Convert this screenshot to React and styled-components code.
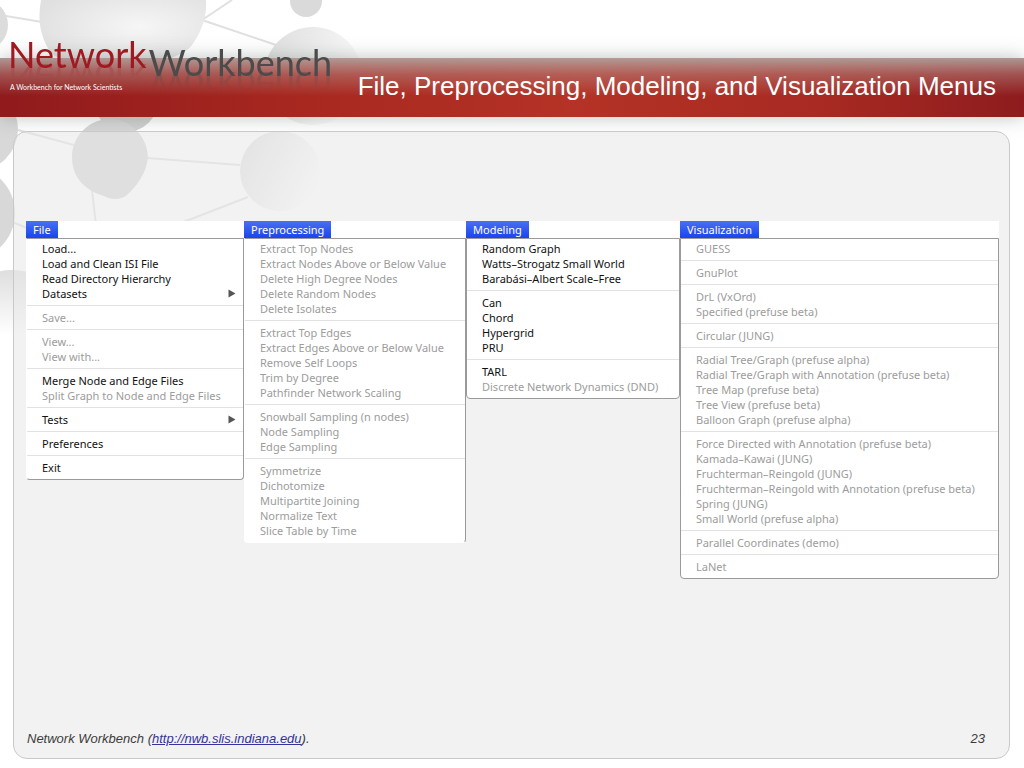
import React from "react";
import styled, { createGlobalStyle } from "styled-components";

const GlobalStyle = createGlobalStyle`
  * { box-sizing: border-box; }
  body {
    margin: 0;
    background: #ffffff;
    font-family: "Liberation Sans", Arial, sans-serif;
  }
`;

const Slide = styled.div`
  position: relative;
  min-height: 100vh;
  display: flex;
  flex-direction: column;
  overflow: hidden;
`;

const Molecules = styled.svg`
  position: absolute;
  top: 0;
  left: 0;
  pointer-events: none;
`;

const Header = styled.header`
  position: relative;
  padding-top: 58px;
`;

const Band = styled.div`
  display: flex;
  align-items: center;
  justify-content: space-between;
  height: 59px;
  padding: 0 28px 4px 8px;
  background:
    linear-gradient(180deg, rgba(180, 172, 168, 0.85) 0, rgba(180, 140, 135, 0.5) 16px, rgba(180, 100, 90, 0) 38px),
    linear-gradient(90deg, #901a1c 0%, #a82820 30%, #b43226 56%, #a82a22 80%, #8e1c1e 100%);
  box-shadow: 0 0 18px rgba(90, 105, 100, 0.4);
`;

const Brand = styled.div`
  display: flex;
  flex-direction: column;
  margin-top: -46px;
`;

const Wordmark = styled.div`
  display: flex;
  align-items: flex-start;
  gap: 2px;
  font-family: Lato, sans-serif;
  font-size: 36px;
  font-weight: 400;
  line-height: 40px;
`;

const Word = styled.span`
  color: ${(p) => (p.$dark ? "#4b4b4b" : "#a01820")};
  padding-top: ${(p) => (p.$dark ? "8px" : "0")};
  -webkit-box-reflect: below -16px linear-gradient(180deg, transparent 50%, rgba(0, 0, 0, 0.5) 100%);
`;

const Tagline = styled.span`
  font-family: Lato, sans-serif;
  font-size: 7px;
  line-height: 10px;
  padding-left: 2px;
  color: #ffffff;
`;

const Title = styled.h1`
  margin: 0;
  font-size: 26px;
  font-weight: 400;
  line-height: 30px;
  color: #ffffff;
  white-space: nowrap;
`;

const Panel = styled.main`
  position: relative;
  flex: 1;
  display: flex;
  flex-direction: column;
  margin: 14px 14px 9px 13px;
  padding: 89px 10px 10px 12px;
  border: 1px solid #c9c9c9;
  border-radius: 14px;
  background: rgba(231, 231, 231, 0.55);
`;

const MenuBar = styled.div`
  display: grid;
  grid-template-columns: 218fr 222fr 214fr 319fr;
  align-items: start;
  background: linear-gradient(#ffffff, #ffffff) 0 0 / 100% 18px no-repeat;
`;

const MenuColumn = styled.section`
  display: flex;
  flex-direction: column;
  align-items: flex-start;
  min-width: 0;
`;

const MenuTitle = styled.button`
  height: 17px;
  padding: 0 7px;
  border: 0;
  background: linear-gradient(#4a70f0, #1a44ee);
  color: #ffffff;
  font-family: "Noto Sans", sans-serif;
  font-size: 11px;
  line-height: 17px;
`;

const MenuList = styled.div`
  width: 100%;
  padding-top: 2px;
  border: 1px solid #9a9a9a;
  border-left-color: ${(p) => (p.$edge ? "#9a9a9a" : "#ffffff")};
  border-bottom-color: ${(p) => (p.$open ? "#ffffff" : "#9a9a9a")};
  border-radius: 0 0 4px 4px;
  background: #ffffff;
`;

const MenuGroup = styled.ul`
  margin: 0;
  padding: 0 0 4px;
  list-style: none;
  & + & {
    padding-top: 4px;
    border-top: 1px solid #e2e2e2;
  }
`;

const MenuItem = styled.button`
  display: flex;
  align-items: center;
  justify-content: space-between;
  width: 100%;
  height: 15px;
  padding: 0 7px 0 15px;
  border: 0;
  background: none;
  color: #111111;
  font-family: "Noto Sans", sans-serif;
  font-size: 11px;
  line-height: 15px;
  white-space: nowrap;
  &:disabled {
    color: #9c9c9c;
  }
`;

const Footer = styled.footer`
  display: flex;
  justify-content: space-between;
  margin-top: auto;
  padding: 0 14px 0 1px;
  font-size: 13px;
  font-style: italic;
  line-height: 18px;
  color: #3c3c3c;
`;

const SiteLink = styled.a`
  color: #33339b;
`;

// a leading "-" marks a disabled item, a trailing ">" a submenu
const menus = [
  {
    title: "File",
    groups: [
      ["Load...", "Load and Clean ISI File", "Read Directory Hierarchy", "Datasets>"],
      ["-Save..."],
      ["-View...", "-View with..."],
      ["Merge Node and Edge Files", "-Split Graph to Node and Edge Files"],
      ["Tests>"],
      ["Preferences"],
      ["Exit"],
    ],
  },
  {
    title: "Preprocessing",
    open: true,
    groups: [
      [
        "-Extract Top Nodes",
        "-Extract Nodes Above or Below Value",
        "-Delete High Degree Nodes",
        "-Delete Random Nodes",
        "-Delete Isolates",
      ],
      [
        "-Extract Top Edges",
        "-Extract Edges Above or Below Value",
        "-Remove Self Loops",
        "-Trim by Degree",
        "-Pathfinder Network Scaling",
      ],
      ["-Snowball Sampling (n nodes)", "-Node Sampling", "-Edge Sampling"],
      ["-Symmetrize", "-Dichotomize", "-Multipartite Joining", "-Normalize Text", "-Slice Table by Time"],
    ],
  },
  {
    title: "Modeling",
    edge: true,
    groups: [
      ["Random Graph", "Watts–Strogatz Small World", "Barabási–Albert Scale–Free"],
      ["Can", "Chord", "Hypergrid", "PRU"],
      ["TARL", "-Discrete Network Dynamics (DND)"],
    ],
  },
  {
    title: "Visualization",
    edge: true,
    groups: [
      ["-GUESS"],
      ["-GnuPlot"],
      ["-DrL (VxOrd)", "-Specified (prefuse beta)"],
      ["-Circular (JUNG)"],
      [
        "-Radial Tree/Graph (prefuse alpha)",
        "-Radial Tree/Graph with Annotation (prefuse beta)",
        "-Tree Map (prefuse beta)",
        "-Tree View (prefuse beta)",
        "-Balloon Graph (prefuse alpha)",
      ],
      [
        "-Force Directed with Annotation (prefuse beta)",
        "-Kamada–Kawai (JUNG)",
        "-Fruchterman–Reingold (JUNG)",
        "-Fruchterman–Reingold with Annotation (prefuse beta)",
        "-Spring (JUNG)",
        "-Small World (prefuse alpha)",
      ],
      ["-Parallel Coordinates (demo)"],
      ["-LaNet"],
    ],
  },
];

const Arrow = () => (
  <svg width="8" height="9" viewBox="0 0 8 9" aria-hidden="true">
    <path d="M0.5 0.5 L7.5 4.5 L0.5 8.5 Z" fill="#555555" />
  </svg>
);

const Menu = ({ menu }) => (
  <MenuColumn>
    <MenuTitle type="button">{menu.title}</MenuTitle>
    <MenuList $edge={menu.edge} $open={menu.open}>
      {menu.groups.map((group) => (
        <MenuGroup key={group[0]}>
          {group.map((item) => (
            <li key={item}>
              <MenuItem type="button" disabled={item.startsWith("-")}>
                {item.replace(/^-|>$/g, "")}
                {item.endsWith(">") && <Arrow />}
              </MenuItem>
            </li>
          ))}
        </MenuGroup>
      ))}
    </MenuList>
  </MenuColumn>
);

const Background = () => (
  <Molecules width="420" height="400" viewBox="0 0 420 400" aria-hidden="true">
    <defs>
      <radialGradient id="big" cx="0.6" cy="0.4" r="0.65">
        <stop offset="0" stopColor="#f6f6f6" />
        <stop offset="1" stopColor="#e0e0e0" />
      </radialGradient>
      <linearGradient id="fade" x1="0" y1="0" x2="1" y2="0.5">
        <stop offset="0" stopColor="#dcdcdc" />
        <stop offset="1" stopColor="#fdfdfd" />
      </linearGradient>
      <linearGradient id="low" x1="0" y1="0" x2="0" y2="1">
        <stop offset="0" stopColor="#dedede" />
        <stop offset="0.6" stopColor="#ffffff" />
      </linearGradient>
    </defs>
    <g stroke="#e0e0e0" strokeWidth="2" fill="none">
      <path d="M6 16 L42 22 M202 20 L232 0 M202 20 L276 45 M18 130 L74 145 M147 158 L240 165 M92 190 L96 225 M248 197 L150 235 M12 222 L27 228" />
    </g>
    <path d="M41 0 C37 22 41 36 49 50 C60 72 172 72 192 45 C203 30 207 14 206 0 Z" fill="url(#big)" />
    <circle cx="-18" cy="25" r="26" fill="#dcdcdc" />
    <circle cx="306" cy="1" r="16" fill="#dadada" />
    <circle cx="313" cy="76" r="49" fill="url(#fade)" />
    <circle cx="-24" cy="129" r="42" fill="#d8d8d8" />
    <circle cx="-32" cy="213" r="47" fill="#d8d8d8" />
    <circle cx="12" cy="325" r="55" fill="url(#low)" />
    <circle cx="126" cy="100" r="32" fill="#d0d0d0" />
    <path d="M110 119 C131 119 148 137 148 158 C146 174 136 187 127 195 C121 200 111 200 104 196 C84 190 72 177 72 157 C72 136 89 119 110 119 Z" fill="#d6d6d6" />
    <circle cx="280" cy="171" r="40" fill="url(#fade)" />
  </Molecules>
);

const App = () => {
  return (
    <>
      <GlobalStyle />
      <Slide>
        <Background />
        <Header>
          <Band>
            <Brand>
              <Wordmark>
                <Word>Network</Word>
                <Word $dark>Workbench</Word>
              </Wordmark>
              <Tagline>A Workbench for Network Scientists</Tagline>
            </Brand>
            <Title>File, Preprocessing, Modeling, and Visualization Menus</Title>
          </Band>
        </Header>
        <Panel>
          <MenuBar>
            {menus.map((menu) => (
              <Menu key={menu.title} menu={menu} />
            ))}
          </MenuBar>
          <Footer>
            <span>
              Network Workbench (<SiteLink href="http://nwb.slis.indiana.edu">http://nwb.slis.indiana.edu</SiteLink>).
            </span>
            <span>23</span>
          </Footer>
        </Panel>
      </Slide>
    </>
  );
};

export default App;
